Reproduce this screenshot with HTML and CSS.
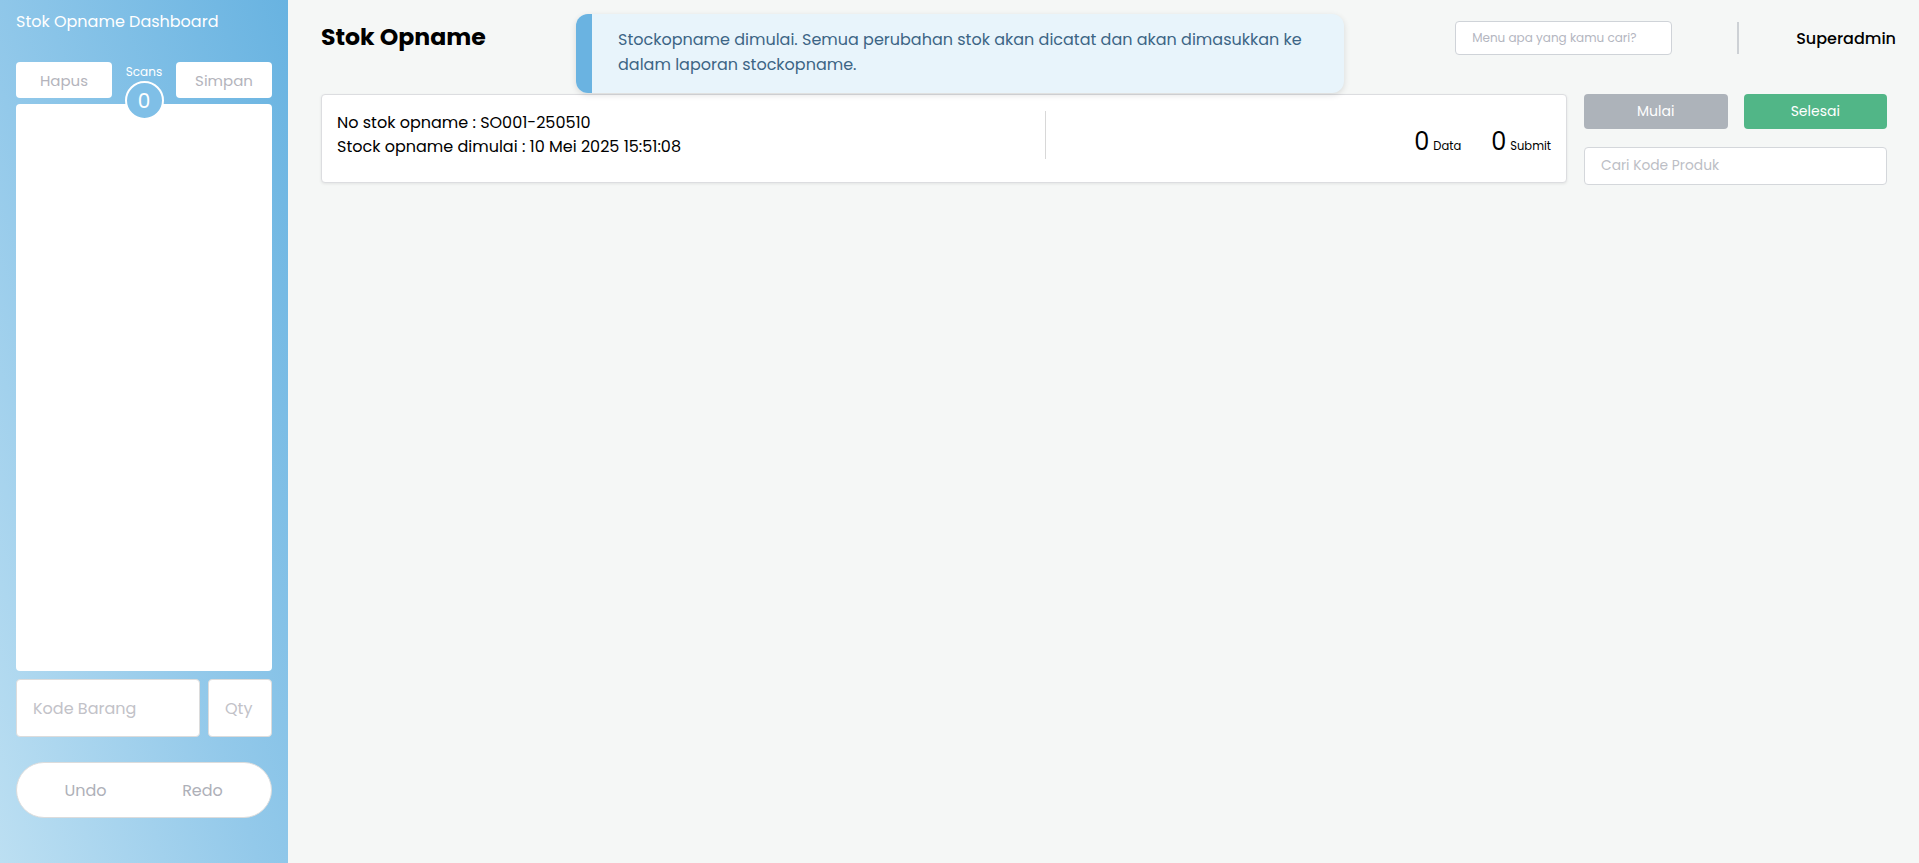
FILE: index.html
```html
<!DOCTYPE html>
<html lang="id">
<head>
<meta charset="utf-8">
<title>Stok Opname Dashboard</title>
<link rel="stylesheet" href="styles.css">
</head>
<body>
<div class="app">
  <aside class="sidebar">
    <div class="side-title">Stok Opname Dashboard</div>
    <div class="top-row">
      <button class="side-btn">Hapus</button>
      <div class="scans">
        <span class="scans-label">Scans</span>
        <span class="scans-count">0</span>
      </div>
      <button class="side-btn">Simpan</button>
    </div>
    <div class="scan-box"></div>
    <div class="input-row">
      <div class="side-input kode">Kode Barang</div>
      <div class="side-input qty">Qty</div>
    </div>
    <div class="pill">
      <span>Undo</span>
      <span>Redo</span>
    </div>
  </aside>
  <main class="main">
    <header class="header">
      <h1 class="page-title">Stok Opname</h1>
      <div class="header-right">
        <div class="search">Menu apa yang kamu cari?</div>
        <div class="vdiv"></div>
        <div class="user">Superadmin</div>
      </div>
    </header>
    <div class="toast">
      <div class="toast-bar"></div>
      <div class="toast-text">Stockopname dimulai. Semua perubahan stok akan dicatat dan akan dimasukkan ke dalam laporan stockopname.</div>
    </div>
    <section class="content">
      <div class="card">
        <div class="card-left">
          <div class="line">No stok opname : SO001-250510</div>
          <div class="line">Stock opname dimulai : 10 Mei 2025 15:51:08</div>
        </div>
        <div class="card-right">
          <div class="stat"><span class="num">0</span><span class="lbl">Data</span></div>
          <div class="stat"><span class="num">0</span><span class="lbl">Submit</span></div>
        </div>
      </div>
      <div class="actions">
        <div class="btn-row">
          <button class="btn btn-grey">Mulai</button>
          <button class="btn btn-green">Selesai</button>
        </div>
        <div class="product-search">Cari Kode Produk</div>
      </div>
    </section>
  </main>
</div>
</body>
</html>
```

FILE: styles.css
```css
* { box-sizing: border-box; }
html, body { margin: 0; padding: 0; }
body {
  font-family: "Poppins", "Open Sans", sans-serif;
  background: #f5f7f6;
  color: #111;
  height: 863px;
  overflow: hidden;
}
.app { display: flex; height: 863px; }

/* Sidebar */
.sidebar {
  width: 288px;
  flex: none;
  height: 863px;
  padding: 10px 16px 0 16px;
  background: linear-gradient(to top right, #bcdff2 0%, #93c9ea 45%, #68b3e1 100%);
  display: flex;
  flex-direction: column;
}
.side-title {
  color: #fff;
  font-size: 16px;
  line-height: 24px;
  height: 24px;
}
.top-row {
  margin-top: 28px;
  display: flex;
  height: 36px;
  flex: none;
  position: relative;
  z-index: 2;
}
.side-btn {
  width: 96px;
  height: 36px;
  border: none;
  background: #fff;
  border-radius: 4px;
  font-family: inherit;
  font-size: 15px;
  color: #b4b4bc;
  padding: 0;
}
.scans {
  width: 64px;
  height: 36px;
  display: flex;
  flex-direction: column;
  align-items: center;
}
.scans-label {
  color: #fff;
  font-size: 12px;
  line-height: 14px;
  margin-top: 3px;
  flex: none;
}
.scans-count {
  flex: none;
  margin-top: 2px;
  width: 39px;
  height: 39px;
  border-radius: 50%;
  border: 2px solid #fff;
  background: #7fbfe7;
  color: #fff;
  font-size: 20px;
  display: flex;
  align-items: center;
  justify-content: center;
  line-height: 1;
}
.scan-box {
  margin-top: 6px;
  height: 567px;
  flex: none;
  background: #fff;
  border-radius: 4px;
  position: relative;
  z-index: 1;
}
.input-row {
  margin-top: 8px;
  display: flex;
  gap: 8px;
  height: 58px;
  flex: none;
}
.side-input {
  background: #fff;
  border: 1px solid #dcdcdc;
  border-radius: 4px;
  font-size: 16px;
  color: #c2c2c8;
  display: flex;
  align-items: center;
  padding-left: 16px;
}
.side-input.kode { width: 184px; }
.side-input.qty { width: 64px; padding-left: 16px; }
.pill {
  margin-top: 25px;
  height: 56px;
  flex: none;
  border-radius: 28px;
  background: #fff;
  border: 1px solid #dcdcdc;
  display: grid;
  grid-template-columns: 1fr 1fr;
  padding: 0 10px;
  align-items: center;
  font-size: 16px;
  color: #aeb0b8;
}
.pill span { text-align: center; }

/* Main */
.main {
  flex: 1;
  padding: 0 32px 0 33px;
  position: relative;
}
.header {
  height: 94px;
  display: flex;
  justify-content: space-between;
  align-items: flex-start;
  margin-right: -9px;
}
.page-title {
  margin: 22px 0 0 0;
  font-size: 23.6px;
  line-height: 30px;
  font-weight: 700;
  color: #000;
}
.header-right {
  display: flex;
  align-items: center;
  margin-top: 21px;
}
.search {
  width: 217px;
  height: 34px;
  border: 1px solid #cfd3d8;
  border-radius: 4px;
  background: #fff;
  font-size: 12px;
  color: #b4b6bf;
  padding-left: 16px;
  display: flex;
  align-items: center;
}
.vdiv {
  width: 2px;
  height: 32px;
  background: #cdd1d5;
  margin-left: 65px;
}
.user {
  margin-left: 57px;
  font-size: 16px;
  font-weight: 500;
  color: #000;
}
.toast {
  position: absolute;
  left: 288px;
  top: 14px;
  width: 768px;
  height: 79px;
  display: flex;
  background: #e8f4fb;
  border-radius: 12px;
  overflow: hidden;
  box-shadow: 0 2px 6px rgba(0,0,0,0.12);
  z-index: 5;
}
.toast-bar {
  width: 16px;
  flex: none;
  background: #6ab3e1;
}
.toast-text {
  padding: 13px 30px 0 26px;
  font-size: 16px;
  line-height: 25px;
  color: #3c6585;
}

.content {
  display: flex;
  gap: 17px;
  align-items: flex-start;
}
.card {
  flex: 1;
  height: 89px;
  background: #fff;
  border: 1px solid #dcdde0;
  border-radius: 4px;
  box-shadow: 0 1px 3px rgba(0,0,0,0.08);
  display: flex;
  padding: 0 15px;
}
.card-left {
  flex: 7;
  padding-top: 16px;
}
.line {
  font-size: 16px;
  line-height: 24px;
  color: #000;
}
.card-right {
  flex: 5;
  margin-top: 16px;
  height: 48px;
  border-left: 1.5px solid #d8d8d8;
  display: flex;
  justify-content: flex-end;
  align-items: flex-end;
  gap: 30px;
}
.stat {
  display: flex;
  align-items: baseline;
  gap: 4px;
  margin-bottom: 2px;
}
.num {
  font-size: 24px;
  line-height: 30px;
  color: #000;
}
.lbl {
  font-size: 11.5px;
  color: #000;
}
.actions {
  width: 303px;
  flex: none;
}
.btn-row {
  display: flex;
  gap: 16px;
}
.btn {
  flex: 1;
  height: 35px;
  border: none;
  border-radius: 4px;
  font-family: inherit;
  font-size: 14px;
  color: #fff;
}
.btn-grey { background: #adb3ba; }
.btn-green { background: #51b687; }
.product-search {
  margin-top: 18px;
  height: 38px;
  background: #fff;
  border: 1px solid #d4d7db;
  border-radius: 4px;
  font-size: 13.8px;
  color: #bcbec5;
  padding-left: 16px;
  display: flex;
  align-items: center;
}
```
